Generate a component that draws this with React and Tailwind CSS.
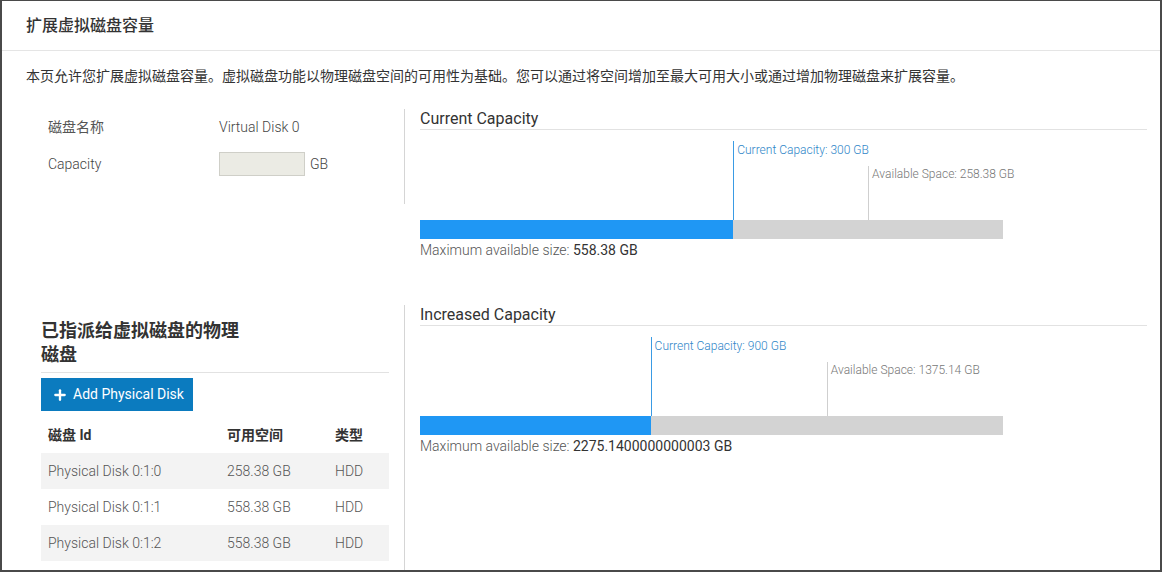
import React from "react";
import { Plus } from "lucide-react";

const disks = [
  { id: "Physical Disk 0:1:0", free: "258.38 GB", type: "HDD" },
  { id: "Physical Disk 0:1:1", free: "558.38 GB", type: "HDD" },
  { id: "Physical Disk 0:1:2", free: "558.38 GB", type: "HDD" },
];

function CapacityChart({ title, current, max }) {
  const pct = (current / max) * 100;
  const avail = (max - current).toFixed(2).replace(/\.?0+$/, "");
  const availMid = pct + (100 - pct) / 2;

  return (
    <div>
      <div className="text-[16px] leading-[20px] text-[#333] border-b border-[#e2e2e2]">
        {title}
      </div>
      <div className="relative w-[583px] h-[109px]">
        {/* current marker */}
        <div
          className="absolute top-[11px] bottom-[19px] w-px bg-[#3a9be4]"
          style={{ left: `${pct}%` }}
        />
        <div
          className="absolute top-[13px] text-[12px] leading-[14px] font-light text-[#2f86c8] whitespace-nowrap pl-[4px]"
          style={{ left: `${pct}%` }}
        >
          Current Capacity: {current} GB
        </div>
        {/* available marker */}
        <div
          className="absolute top-[36px] bottom-[19px] w-px bg-[#cfcfcf]"
          style={{ left: `${availMid}%` }}
        />
        <div
          className="absolute top-[37px] text-[12px] leading-[14px] font-light text-[#777] whitespace-nowrap pl-[4px]"
          style={{ left: `${availMid}%` }}
        >
          Available Space: {avail} GB
        </div>
        {/* bar */}
        <div className="absolute left-0 right-0 bottom-0 h-[19px] flex bg-[#d3d3d3]">
          <div className="h-full bg-[#1f97f4]" style={{ width: `${pct}%` }} />
        </div>
      </div>
      <div className="mt-[2px] text-[14px] leading-[18px] font-light text-[#555]">
        Maximum available size: <span className="font-normal text-[#333]">{max} GB</span>
      </div>
    </div>
  );
}

export default function App() {
  return (
    <div
      className="w-[1162px] h-[572px] overflow-hidden bg-white border-l-2 border-r-2 border-b-2 border-t border-[#4a4a4a]"
      style={{ fontFamily: 'Roboto, "Noto Sans CJK SC", sans-serif' }}
    >
      {/* Header */}
      <div className="h-[50px] flex items-center px-[24px] border-b border-[#e5e5e5]">
        <h1 className="text-[16px] font-medium text-[#333]">扩展虚拟磁盘容量</h1>
      </div>

      {/* Description */}
      <p className="mt-[15px] px-[24px] text-[14px] leading-[20px] text-[#333]">
        本页允许您扩展虚拟磁盘容量。虚拟磁盘功能以物理磁盘空间的可用性为基础。您可以通过将空间增加至最大可用大小或通过增加物理磁盘来扩展容量。
      </p>

      {/* Top row */}
      <div className="flex items-start pl-[39px] mt-[23px]">
        <div className="w-[364px] h-[95px] border-r border-[#d5d5d5] pr-[15px] text-[14px] font-light text-[#444]">
          <div className="h-[36px] flex items-center pl-[7px]">
            <span className="w-[171px] font-normal text-[#555]">磁盘名称</span>
            <span>Virtual Disk 0</span>
          </div>
          <div className="h-[38px] flex items-center pl-[7px]">
            <span className="w-[171px]">Capacity</span>
            <div className="w-[86px] h-[24px] bg-[#ebebe4] border border-[#cfcfc8]" />
            <span className="ml-[5px]">GB</span>
          </div>
        </div>
        <div className="flex-1 pl-[15px] pr-[13px]">
          <CapacityChart title="Current Capacity" current={300} max={558.38} />
        </div>
      </div>

      {/* Bottom row */}
      <div className="flex items-start pl-[39px] mt-[46px]">
        <div className="w-[364px] h-[280px] border-r border-[#d5d5d5] pr-[15px]">
          <div className="border-b border-[#e2e2e2] pt-[14px] pb-[5px]">
            <h2 className="w-[210px] text-[18px] leading-[24px] font-bold text-[#333]">
              已指派给虚拟磁盘的物理磁盘
            </h2>
          </div>
          <button className="mt-[5px] h-[33px] w-[152px] flex items-center gap-[5px] pl-[11px] bg-[#0b7bbf] text-white text-[14px]">
            <Plus size={16} strokeWidth={3.5} />
            <span>Add Physical Disk</span>
          </button>
          <div className="mt-[6px] text-[14px]">
            <div className="h-[36px] flex items-center font-bold text-[#333]">
              <span className="w-[179px] pl-[7px]">磁盘 Id</span>
              <span className="w-[108px] pl-[7px]">可用空间</span>
              <span className="pl-[7px]">类型</span>
            </div>
            {disks.map((d, i) => (
              <div
                key={d.id}
                className={`h-[36px] flex items-center font-light text-[#555] ${
                  i % 2 === 0 ? "bg-[#f3f3f3]" : "bg-white"
                }`}
              >
                <span className="w-[179px] pl-[7px]">{d.id}</span>
                <span className="w-[108px] pl-[7px]">{d.free}</span>
                <span className="pl-[7px]">{d.type}</span>
              </div>
            ))}
          </div>
        </div>
        <div className="flex-1 pl-[15px] pr-[13px]">
          <CapacityChart title="Increased Capacity" current={900} max={2275.1400000000003} />
        </div>
      </div>
    </div>
  );
}
